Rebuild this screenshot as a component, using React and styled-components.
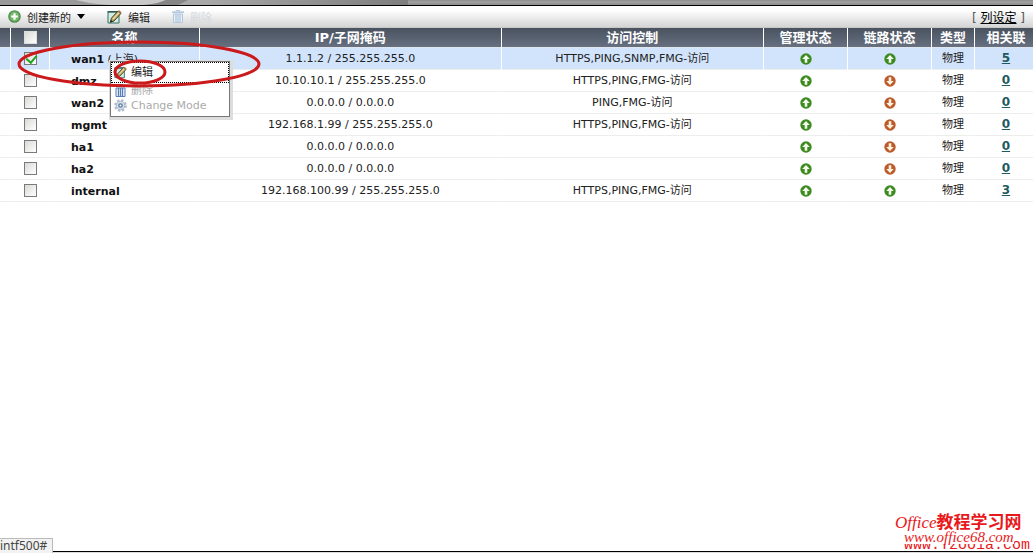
import React, { useState } from "react";
import styled, { createGlobalStyle, css } from "styled-components";

const columns = [
  { key: "gutter", label: "", width: "11px" },
  { key: "check", label: "", width: "39px" },
  { key: "name", label: "名称", width: "150px" },
  { key: "ip", label: "IP/子网掩码", width: "auto" },
  { key: "access", label: "访问控制", width: "25.4%" },
  { key: "admin", label: "管理状态", width: "84px" },
  { key: "link", label: "链路状态", width: "84px" },
  { key: "type", label: "类型", width: "43px" },
  { key: "ref", label: "相关联", width: "58px" },
];

const interfaces = [
  { name: "wan1", alias: "(上海)", ip: "1.1.1.2 / 255.255.255.0", access: "HTTPS,PING,SNMP,FMG-访问", link: true, refs: 5 },
  { name: "dmz", ip: "10.10.10.1 / 255.255.255.0", access: "HTTPS,PING,FMG-访问", link: false, refs: 0 },
  { name: "wan2", ip: "0.0.0.0 / 0.0.0.0", access: "PING,FMG-访问", link: false, refs: 0 },
  { name: "mgmt", ip: "192.168.1.99 / 255.255.255.0", access: "HTTPS,PING,FMG-访问", link: false, refs: 0 },
  { name: "ha1", ip: "0.0.0.0 / 0.0.0.0", access: "", link: false, refs: 0 },
  { name: "ha2", ip: "0.0.0.0 / 0.0.0.0", access: "", link: false, refs: 0 },
  { name: "internal", ip: "192.168.100.99 / 255.255.255.0", access: "HTTPS,PING,FMG-访问", link: true, refs: 3 },
];

const PlusIcon = () => (
  <svg width="13" height="13" viewBox="0 0 13 13" aria-hidden="true">
    <circle cx="6.5" cy="6.5" r="5.6" fill="#79b46c" stroke="#4b8f4a" strokeWidth="1.4" />
    <path d="M6.5 3.2v6.6M3.2 6.5h6.6" stroke="#fff" strokeWidth="2.2" />
  </svg>
);

const EditIcon = () => (
  <svg width="15" height="14" viewBox="0 0 15 14" aria-hidden="true">
    <path d="M1 2h11v11H1z" fill="#d5ece6" stroke="#2f7062" />
    <path d="M.5 1.7h12" stroke="#2c5b52" strokeWidth="1.4" />
    <path d="M3.4 12.2l1-4L11 1l3 2.4-7 7.6z" fill="#b8a468" stroke="#4a4528" />
    <path d="M6 9l6-6.4" stroke="#efe2a6" strokeWidth="1.2" />
    <path d="M10.6 1.2L12 .3l2.5 1.8-.6 1.5z" fill="#a9775a" />
    <path d="M3 12.8l.9-2.9 1.9 1.5z" fill="#16251f" />
  </svg>
);

const TrashIcon = () => (
  <svg width="12" height="13" viewBox="0 0 12 13" aria-hidden="true">
    <path d="M4 1.5V.5h4v1" fill="none" stroke="currentColor" />
    <path d="M0 2.2h12" stroke="currentColor" strokeWidth="1.6" />
    <path d="M1.5 4h9v8.5h-9z" fill="#e4edf8" stroke="currentColor" />
    <path d="M4 4v8M6 4v8M8 4v8" stroke="currentColor" strokeWidth="1.2" />
  </svg>
);

const GearIcon = () => (
  <svg width="13" height="13" viewBox="0 0 13 13" aria-hidden="true">
    <circle cx="6.5" cy="6.5" r="5.2" fill="none" stroke="#b4bfcd" strokeWidth="2.4" strokeDasharray="2.4 1.68" />
    <circle cx="6.5" cy="6.5" r="4.3" fill="#d9e0ea" stroke="#a9b7ca" />
    <circle cx="6.5" cy="6.5" r="1.7" fill="#fff" stroke="#55769f" strokeWidth="1.3" />
  </svg>
);

const StatusIcon = ({ up }) => (
  <svg width="12" height="12" viewBox="0 0 12 12" role="img" aria-label={up ? "up" : "down"}>
    <circle cx="6" cy="6" r="5.7" fill={up ? "#3c8a20" : "#bd5a2a"} />
    <path
      d={up ? "M6 1.9L9.8 6H7.3v3.7H4.7V6H2.2z" : "M6 10.1L9.8 6H7.3V2.3H4.7V6H2.2z"}
      fill={up ? "#f2fbec" : "#fff3e0"}
    />
  </svg>
);

function App() {
  const [selected, setSelected] = useState(["wan1"]);
  const toggle = (name) =>
    setSelected(
      selected.includes(name)
        ? selected.filter((n) => n !== name)
        : [...selected, name]
    );
  const toggleAll = () =>
    setSelected(
      selected.length === interfaces.length ? [] : interfaces.map((i) => i.name)
    );

  return (
    <Page>
      <GlobalStyle />
      <Banner aria-hidden="true">
        <svg width="408" height="5" viewBox="0 0 408 5">
          <defs>
            <linearGradient id="sheen">
              <stop offset="0" stopColor="#b4b4b4" />
              <stop offset="0.5" stopColor="#a8a8a8" />
              <stop offset="1" stopColor="#7e7e7e" />
            </linearGradient>
          </defs>
          <path d="M0 0h408v5H0z" fill="url(#sheen)" />
          <path d="M0 0h97l15 5H0z" fill="#999" />
          <path d="M76 0h90q-8 4-22 5h-34Q90 4 76 0z" fill="#c9c9c9" />
          <path d="M166 0h22l-10 5h-34q14-1 22-5z" fill="#858585" />
        </svg>
      </Banner>
      <Toolbar>
        <ToolButton>
          <PlusIcon />
          创建新的
          <Caret />
        </ToolButton>
        <ToolButton>
          <EditIcon />
          编辑
        </ToolButton>
        <ToolButton disabled>
          <TrashIcon />
          删除
        </ToolButton>
        <ColumnSetting>
          [ <a href="#columns">列设定</a> ]
        </ColumnSetting>
      </Toolbar>
      <Table>
        <colgroup>
          {columns.map((c) => (
            <Col key={c.key} $width={c.width} />
          ))}
        </colgroup>
        <thead>
          <tr>
            {columns.map((c) => (
              <HeadCell key={c.key}>
                {c.key === "check" ? (
                  <Check
                    aria-label="all"
                    checked={selected.length === interfaces.length}
                    onChange={toggleAll}
                  />
                ) : (
                  c.label
                )}
              </HeadCell>
            ))}
          </tr>
        </thead>
        <tbody>
          {interfaces.map((item) => (
            <Row key={item.name} $selected={selected.includes(item.name)}>
              <Cell />
              <Cell>
                <Check
                  aria-label={item.name}
                  checked={selected.includes(item.name)}
                  onChange={() => toggle(item.name)}
                />
              </Cell>
              <NameCell>
                <b>{item.name}</b> {item.alias}
                {item.alias && (
                  <>
                    <Menu>
                      <MenuItem $active>
                        <EditIcon />
                        编辑
                      </MenuItem>
                      <MenuItem disabled>
                        <TrashIcon />
                        删除
                      </MenuItem>
                      <MenuItem disabled>
                        <GearIcon />
                        Change Mode
                      </MenuItem>
                    </Menu>
                    <Marks width="244" height="52" viewBox="0 0 244 52" aria-hidden="true">
                      <ellipse cx="122" cy="26" rx="120" ry="22" />
                      <ellipse cx="123" cy="34" rx="25" ry="11" />
                    </Marks>
                  </>
                )}
              </NameCell>
              <Cell>{item.ip}</Cell>
              <Cell>{item.access}</Cell>
              <Cell>
                <StatusIcon up />
              </Cell>
              <Cell>
                <StatusIcon up={item.link} />
              </Cell>
              <Cell>物理</Cell>
              <Cell>
                <RefLink href="#references">{item.refs}</RefLink>
              </Cell>
            </Row>
          ))}
        </tbody>
      </Table>
      <Footer>
        <StatusTip>intf500#</StatusTip>
        <FooterLine />
        <Watermark>
          <SiteName>
            Office<strong>教程学习网</strong>
          </SiteName>
          <SiteUrl>www.office68.com</SiteUrl>
          <OldUrl>www.Yzoo1a.com</OldUrl>
        </Watermark>
      </Footer>
    </Page>
  );
}

const GlobalStyle = createGlobalStyle`
  * {
    box-sizing: border-box;
  }
  body {
    margin: 0;
    background: #fff;
    color: #222;
    font-family: "DejaVu Sans", "Noto Sans CJK SC", sans-serif;
    font-size: 11px;
  }
  button {
    font: inherit;
    color: inherit;
    border: 0;
    background: none;
    padding: 0;
  }
  svg {
    flex: none;
  }
`;
const Page = styled.div`
  display: flex;
  flex-direction: column;
  min-height: 100vh;
  overflow: hidden;
`;
const Banner = styled.div`
  height: 6px;
  overflow: hidden;
  background: linear-gradient(#8c8c8c, #a2a2a2 40%, #8c8c8c);
  border-bottom: 1px solid #000;
  svg {
    display: block;
  }
`;
const Toolbar = styled.div`
  display: flex;
  align-items: center;
  gap: 22px;
  height: 22px;
  padding: 0 8px;
  background: linear-gradient(#fff 20%, #d4d4d4);
  border-bottom: 1px solid #c8c8c8;
`;
const ToolButton = styled.button`
  display: flex;
  align-items: center;
  gap: 6px;
  color: #222;
  &:disabled {
    color: #d6d9de;
  }
  &:disabled svg {
    color: #b3c8dc;
  }
`;
const Caret = styled.span`
  border: 4px solid transparent;
  border-top: 5px solid #000;
  border-bottom: 0;
`;
const ColumnSetting = styled.span`
  margin-left: auto;
  font-size: 12px;
  color: #555;
  a {
    color: #000;
  }
`;
const Table = styled.table`
  width: 100%;
  table-layout: fixed;
  border-collapse: separate;
  border-spacing: 0;
`;
const Col = styled.col`
  width: ${(p) => p.$width};
`;
const HeadCell = styled.th`
  height: 20px;
  padding: 0;
  font-size: 13px;
  line-height: 16px;
  white-space: nowrap;
  color: #fff;
  background: linear-gradient(#4a525f, #667080);
  border-right: 1px solid #fff;
  border-bottom: 1px solid #dfe6ee;
  &:last-child {
    padding-left: 4px;
    border-right: 0;
  }
`;
const Cell = styled.td`
  height: 22px;
  padding: 0;
  line-height: 16px;
  text-align: center;
  white-space: nowrap;
  border-right: 1px solid transparent;
  border-bottom: 1px solid #eceeec;
  svg {
    display: block;
    margin: 0 auto;
  }
  &:last-child {
    padding-left: 4px;
    border-right: 0;
  }
`;
const NameCell = styled(Cell)`
  position: relative;
  padding: 2px 0 0 21px;
  text-align: left;
  b {
    color: #111;
  }
`;
const Row = styled.tr`
  ${(p) =>
    p.$selected &&
    css`
      td {
        background: #d2e4fc;
        border-right-color: #fff;
      }
    `}
`;
const Check = styled.input.attrs({ type: "checkbox" })`
  appearance: none;
  display: block;
  width: 13px;
  height: 13px;
  margin: 0 auto;
  border: 1px solid #7a7a7a;
  background: linear-gradient(135deg, #d9d9d6, #fff);
  &:checked::after {
    content: "";
    display: block;
    width: 5px;
    height: 8px;
    margin-left: 3px;
    border: solid #21a121;
    border-width: 0 2px 2px 0;
    transform: rotate(40deg);
  }
  th & {
    border-color: #ddd;
  }
`;
const RefLink = styled.a`
  font-size: 12px;
  font-weight: bold;
  color: #1d5a62;
`;
const Menu = styled.div`
  position: absolute;
  z-index: 1;
  top: 13px;
  left: 60px;
  width: 120px;
  height: 56px;
  background: #fff;
  border: 1px solid #777;
  box-shadow: 1px 1px 0 2px #ddd;
`;
const MenuItem = styled.button`
  display: flex;
  align-items: center;
  gap: 4px;
  width: 100%;
  height: ${(p) => (p.$active ? "21px" : "15px")};
  padding-left: 2px;
  border: 1px dotted ${(p) => (p.$active ? "#000" : "transparent")};
  &:disabled {
    color: #aaa;
  }
  svg {
    width: 13px;
    height: 13px;
    margin: 0;
  }
  &:disabled svg {
    color: #5b7fb4;
  }
`;
const Marks = styled.svg`
  position: absolute;
  z-index: 2;
  top: -10px;
  left: -33px;
  pointer-events: none;
  fill: none;
  stroke: #cb1a1c;
  stroke-width: 3px;
`;
const Footer = styled.footer`
  position: relative;
  display: flex;
  align-items: flex-end;
  margin-top: auto;
`;
const StatusTip = styled.div`
  padding-right: 5px;
  font-family: "Noto Sans", sans-serif;
  font-size: 12px;
  line-height: 14px;
  color: #444;
  background: #f2f2f2;
  border-top: 1px solid #bbb;
  border-right: 1px solid #bbb;
`;
const FooterLine = styled.div`
  flex: 1;
  height: 2px;
  background: #ddd;
  border-top: 1px solid #000;
`;
const Watermark = styled.div`
  position: absolute;
  right: 3px;
  bottom: 0;
  display: grid;
  justify-items: start;
  padding-left: 9px;
  color: #e8191c;
  font-family: "Liberation Serif", "Noto Sans CJK SC", serif;
  white-space: nowrap;
`;
const SiteName = styled.span`
  margin-left: -9px;
  font-size: 17px;
  line-height: 16px;
  font-style: italic;
  strong {
    font-style: normal;
  }
`;
const SiteUrl = styled.span`
  z-index: 1;
  font-size: 15px;
  line-height: 13px;
  font-style: italic;
  background: #fff;
`;
const OldUrl = styled.span`
  margin-top: -5px;
  font: 15px/14px "Liberation Mono", monospace;
`;

export default App;
